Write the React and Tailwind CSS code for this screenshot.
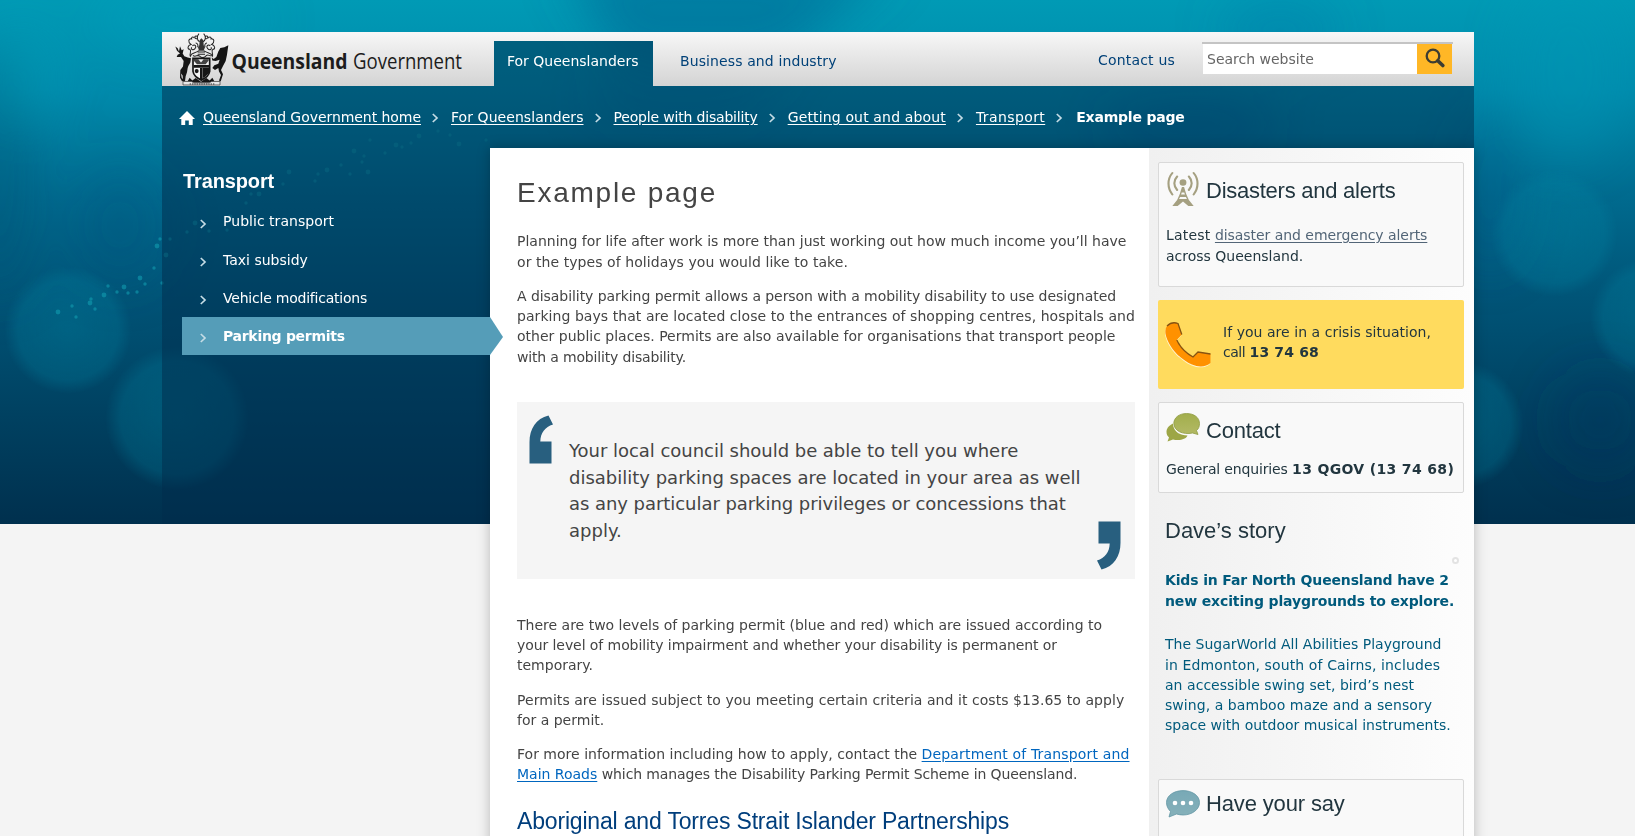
function T({ children, c = '' }) {
  return <span className={'whitespace-nowrap ' + c}>{children}</span>;
}

const DOTS = [
  [58, 312], [72, 306], [76, 317], [90, 303], [91, 299], [95, 309], [104, 295], [108, 286], [117, 292], [124, 287], [128, 293], [137, 292], [140, 278], [145, 284], [154, 268], [157, 246], [160, 239], [162, 283], [166, 255], [170, 239], [187, 232], [195, 223], [209, 231], [227, 230], [230, 217], [246, 203], [251, 194], [259, 194], [257, 187], [283, 184], [289, 172], [315, 181], [318, 174], [327, 170], [341, 165], [350, 174], [354, 151], [362, 162], [364, 156], [368, 172], [370, 140], [385, 153], [396, 145], [402, 147], [411, 143], [419, 136], [438, 131], [450, 135], [459, 144], [486, 140],
];

function Backdrop() {
  return (
    <svg className="absolute left-0 top-0" width="1635" height="524" viewBox="0 0 1635 524">
      <defs>
        <linearGradient id="sea" x1="0" y1="0" x2="0" y2="1">
          <stop offset="0" stopColor="#009ab5" />
          <stop offset=".17" stopColor="#008bac" />
          <stop offset=".38" stopColor="#006a8e" />
          <stop offset=".57" stopColor="#005477" />
          <stop offset=".78" stopColor="#004262" />
          <stop offset="1" stopColor="#00304e" />
        </linearGradient>
        <radialGradient id="bokeh">
          <stop offset="0" stopColor="#0088a6" stopOpacity=".34" />
          <stop offset=".78" stopColor="#0088a6" stopOpacity=".26" />
          <stop offset="1" stopColor="#0088a6" stopOpacity="0" />
        </radialGradient>
        <filter id="soft" filterUnits="userSpaceOnUse" x="-200" y="-200" width="2035" height="924"><feGaussianBlur stdDeviation="24" /></filter>
      </defs>
      <rect width="1635" height="524" fill="url(#sea)" />
      <g filter="url(#soft)">
        <ellipse cx="0" cy="170" rx="34" ry="130" fill="#004f74" opacity=".35" />
        <ellipse cx="120" cy="225" rx="50" ry="60" fill="#004a7c" opacity=".25" />
        <path d="M560-40H900L780 60H620Z" fill="#00608f" opacity=".5" />
        <ellipse cx="180" cy="20" rx="90" ry="30" fill="#00a4c0" opacity=".3" />
        <ellipse cx="1280" cy="30" rx="60" ry="30" fill="#0072a5" opacity=".3" />
        <ellipse cx="1190" cy="125" rx="90" ry="26" fill="#004080" opacity=".3" />
        <ellipse cx="680" cy="100" rx="100" ry="24" fill="#004080" opacity=".2" />
        <ellipse cx="25" cy="75" rx="32" ry="50" fill="#00a4bd" opacity=".3" />
        <ellipse cx="1570" cy="70" rx="60" ry="90" fill="#0098b8" opacity=".35" />
        <ellipse cx="1490" cy="190" rx="30" ry="80" fill="#005080" opacity=".3" />
        <ellipse cx="1600" cy="420" rx="50" ry="50" fill="#00305a" opacity=".3" />
      </g>
      <g fill="url(#bokeh)">
        <circle cx="68" cy="330" r="64" />
        <circle cx="177" cy="418" r="72" />
        <circle cx="1554" cy="233" r="64" />
        <circle cx="1460" cy="425" r="64" />
        <circle cx="1650" cy="318" r="60" />
      </g>
      <g fill="#12a3b5">
        {DOTS.map(([x, y], i) => <circle key={i} cx={x} cy={y} r={i % 3 === 0 ? 2.4 : 1.7} opacity={x < 175 ? 0.55 : 0.5} />)}
      </g>
      <path d="M162 86H494V41H653V86H1474V524H162Z" fill="#002b4b" opacity=".5" />
    </svg>
  );
}

function Crest() {
  return (
    <svg width="56" height="54" viewBox="12 8 168 156" preserveAspectRatio="none" className="shrink-0">
      <g fill="#151515">
        <path d="M27 70 18 62 13 50 20 55 24 64 27 49 32 61 38 58 35 70 40 78 50 82 60 84 58 96 52 106 50 112 48 124 44 136 42 150 36 150 35 134 30 128 32 140 40 149 33 150 27 140 28 118 36 108 38 92 30 80 17 80 20 74Z" />
        <path d="M172 46 160 52 148 54 142 64 136 80 128 86 122 82 124 90 134 92 146 88 142 100 130 104 124 112 132 118 142 112 144 122 150 132 144 148 149 151 156 130 150 118 156 106 164 92 168 74Z" />
        <path d="M50 150 56 140 64 148 74 141 90 152 106 141 116 148 124 140 130 150 112 154H68Z" />
      </g>
      <path d="M66 84H116V122C114 134 103 142 91 147 79 142 68 134 66 122Z" fill="#f3f3f3" stroke="#151515" strokeWidth="5" />
      <g fill="#151515">
        <path d="M68 103H115V111H68ZM87 112H95V146H87Z" />
        <path d="M96 112H114V124C110 132 102 138 96 141Z" />
        <path d="M69 86 82 87 90 96 98 87 113 87 113 90 104 101H78L69 92Z" opacity=".8" />
        <circle cx="77" cy="121" r="6" />
      </g>
      <g fill="none" stroke="#222" strokeWidth="3">
        <path d="M84 62C70 72 62 66 58 78 54 70 64 62 56 58 48 58 50 46 60 44 50 38 52 26 62 28 60 20 70 22 70 26M64 48c8-6 14 2 8 8s-14 2-10-4M98 62c14 10 22 4 26 16 4-8-6-16 2-20 8 0 6-12-4-14 10-6 8-18-2-16 2-8-8-6-8-2M118 48c-8-6-14 2-8 8s14 2 10-4M66 76c8 6 14-4 20 2s14 4 20-2 10 4 14 0" />
        <path d="M84 13c-8 8-6 20 2 23M98 13c8 8 6 20-2 23M78 20c-10-2-8 8 2 8M104 20c10-2 8 8-2 8M80 66H102M80 72H102M74 40c6 0 8 6 6 12M108 40c-6 0-8 6-6 12" />
      </g>
      <path d="M86 32 91 26 97 32 98 46 102 52 98 62H84L81 52 85 46Z" fill="#333" />
      <path d="M36 151H62L68 155H114L122 151H147V161H36Z" fill="#e6e6e6" stroke="#333" strokeWidth="2" />
      <path d="M56 158H130" stroke="#333" strokeWidth="3" strokeDasharray="4 3" />
    </svg>
  );
}

function Chevron({ className = '' }) {
  return (
    <svg width="7" height="10" viewBox="0 0 7 10" className={'shrink-0 ' + className}>
      <path d="M.8 1 5 5 .8 9" fill="none" stroke="#c5dce5" strokeWidth="1.700" />
    </svg>
  );
}

function Header() {
  return (
    <header className="flex h-[54px]">
      <div className="flex w-[332px] shrink-0 bg-linear-to-b from-[#f7f7f7] to-[#d4d4d4] pl-[13px]">
        <Crest />
        <svg width="263" height="54" className="shrink-0" fontFamily="'Open Sans','Noto Sans',sans-serif" fill="#1c1c1c">
          <text x=".5" y="37" fontSize="21.500" fontWeight="700" textLength="116" lengthAdjust="spacingAndGlyphs">Queensland</text>
          <text x="122" y="37" fontSize="21.500" textLength="109" lengthAdjust="spacingAndGlyphs">Government</text>
        </svg>
      </div>
      <div className="w-[159px] shrink-0">
        <div className="h-[9px] bg-linear-to-b from-[#f7f7f7] to-[#f1f1f1]" />
        <a className="flex h-[45px] pl-[13px] pt-[10px] leading-5 text-white"><T>For Queenslanders</T></a>
      </div>
      <div className="flex flex-1 bg-linear-to-b from-[#f7f7f7] to-[#d4d4d4]">
        <nav className="flex flex-1 justify-between pl-[27px] pr-[27px] pt-[19px] leading-5 text-[#004178]">
          <T c="tracking-[.110px]">Business and industry</T>
          <T c="-mt-px tracking-[.19px]">Contact us</T>
        </nav>
        <form className="mr-[21px] mt-[10px] flex h-8 w-[251px] border-t-2 border-[#c4c4c4]">
          <div className="ml-px flex h-[30px] flex-1 items-start bg-white pl-1 pt-[5px] leading-5 text-[#666]"><T>Search website</T></div>
          <div className="mr-px flex h-[30px] w-[35px] justify-center bg-[#ffb726] pt-[4px]">
            <svg width="20" height="21" viewBox="0 0 20 21" fill="none" stroke="#3c3c32">
              <circle cx="8" cy="8" r="6.300" strokeWidth="2.300" />
              <path d="m12.800 12.800 5 4.700" strokeWidth="3.600" strokeLinecap="round" />
            </svg>
          </div>
        </form>
      </div>
    </header>
  );
}

const CRUMBS = [
  ['Queensland Government home', 'tracking-[-.055px]'],
  ['For Queenslanders', 'tracking-[.06px]'],
  ['People with disability', 'tracking-[-.180px]'],
  ['Getting out and about', 'tracking-[.150px]'],
  ['Transport', 'tracking-[.400px]'],
];

function Breadcrumbs() {
  return (
    <div className="flex h-[62px] items-start pl-[17px] pt-[21px] leading-5 text-white">
      <svg width="16" height="14" viewBox="0 0 16 14" className="mr-2 mt-[4px] shrink-0"><path d="M8 0 16 8H13.700V14H9.800V9.500H6.200V14H2.300V8H0Z" fill="#fff" /></svg>
      {CRUMBS.map(([t, c]) => (
        <div key={t} className="flex">
          <T c={'underline underline-offset-2 ' + c}>{t}</T>
          <Chevron className="ml-[11px] mr-[12px] mt-[6px]" />
        </div>
      ))}
      <T c="ml-px font-bold tracking-[-.200px]">Example page</T>
    </div>
  );
}

function SideNav() {
  return (
    <nav className="w-[328px] shrink-0 pl-5 text-white">
      <h2 className="ml-px mt-[21px] text-[20px] leading-6 font-bold font-['Liberation_Sans']"><T c="tracking-[-.120px]">Transport</T></h2>
      <div className="mt-[10px]">
        {[['Public transport', 'tracking-[.03px]'], ['Taxi subsidy', 'mt-px'], ['Vehicle modifications', 'mt-px tracking-[-.220px]']].map(([t, c]) => (
          <div key={t} className="flex h-[38px] pl-[18px] pt-[8px] leading-5">
            <Chevron className="mr-[16px] mt-[8px]" /><T c={c}>{t}</T>
          </div>
        ))}
        <div className="relative z-10 flex h-[38px] w-[321px] bg-[#559db8] pl-[18px] pt-[8px] leading-5 font-bold [clip-path:polygon(0_0,308px_0,321px_20px,308px_100%,0_100%)]">
          <Chevron className="mr-[16px] mt-[8px]" /><T c="mt-px tracking-[-.290px]">Parking permits</T>
        </div>
      </div>
    </nav>
  );
}

function P({ lines, className = '' }) {
  return <p className={'leading-[20.200px] ' + className}>{lines.map(([t, c]) => <span className="block" key={t}><T c={c}>{t}</T></span>)}</p>;
}

function Quote({ className = '' }) {
  return <svg width="25" height="49" viewBox="0 0 25 49" className={'absolute ' + className}><path d="M19.500.500 24 9.500C16 12 11.500 18 11.300 26.500H22.500V48.500H0.500V27C.500 14 7 3.500 19.500.500Z" fill="#285f7f" /></svg>;
}

const LINK = 'text-[#0066bf] underline underline-offset-2 ';

function Main() {
  return (
    <main className="w-[659px] shrink-0 bg-white pl-[27px] text-[#444]">
      <h1 className="mt-[27px] text-[28px] leading-9 font-['Liberation_Sans']"><T c="tracking-[1.750px]">Example page</T></h1>
      <P className="mt-[20.400px]" lines={[['Planning for life after work is more than just working out how much income you’ll have', ''], ['or the types of holidays you would like to take.', 'tracking-[.065px]']]} />
      <P className="mt-[14.200px]" lines={[['A disability parking permit allows a person with a mobility disability to use designated', 'tracking-[-.060px]'], ['parking bays that are located close to the entrances of shopping centres, hospitals and', 'tracking-[.06px]'], ['other public places. Permits are also available for organisations that transport people', ''], ['with a mobility disability.', 'tracking-[-.170px]']]} />
      <blockquote className="relative mt-[35px] h-[177px] w-[618px] bg-[#f5f5f5] pl-[52px] pt-[36px] text-[18px] leading-[26.800px]">
        <Quote className="left-[12px] top-[13px]" />
        {[['Your local council should be able to tell you where', 'tracking-[-.030px]'], ['disability parking spaces are located in your area as well', ''], ['as any particular parking privileges or concessions that', 'tracking-[-.050px]'], ['apply.', '']].map(([t, c]) => <div key={t}><T c={c}>{t}</T></div>)}
        <Quote className="left-[579px] top-[119px] rotate-180" />
      </blockquote>
      <P className="mt-[36px]" lines={[['There are two levels of parking permit (blue and red) which are issued according to', ''], ['your level of mobility impairment and whether your disability is permanent or', 'tracking-[-.075px]'], ['temporary.', '']]} />
      <P className="mt-[14.400px]" lines={[['Permits are issued subject to you meeting certain criteria and it costs $13.65 to apply', 'tracking-[.050px]'], ['for a permit.', '']]} />
      <div className="mt-[14px] leading-[20.200px]">
        <div><T c="tracking-[.010px]">For more information including how to apply, contact the</T> <T c={LINK + 'tracking-[.160px]'}>Department of Transport and</T></div>
        <div><T c={LINK}>Main Roads</T> <T c="tracking-[-.110px]">which manages the Disability Parking Permit Scheme in Queensland.</T></div>
      </div>
      <h2 className="mt-[22px] text-[23px] leading-7 text-[#003e7c] font-['Liberation_Sans']"><T c="tracking-[-.175px]">Aboriginal and Torres Strait Islander Partnerships</T></h2>
    </main>
  );
}

function Heading({ children, c }) {
  return <h2 className="text-[22px] leading-7 font-['Liberation_Sans']"><T c={c}>{children}</T></h2>;
}

const CARD = 'rounded-[2px] border border-[#d9d9d9] bg-[#f9f9f9] ';

function Aside() {
  return (
    <aside className="w-[325px] shrink-0 bg-linear-to-r from-[#f0f0f0] to-[#fdfdfd] pl-[9px] pr-[10px] pt-[14px] text-[#22363f]">
      <section className={CARD + 'h-[125px] pl-[7px]'}>
        <div className="flex h-[62px] pt-[8px]">
          <svg width="32" height="36" viewBox="0 0 30 36" preserveAspectRatio="none" className="ml-px mr-[7px]" fill="none" stroke="#a5a081" strokeWidth="2" strokeLinecap="round">
            <path d="M5 2C.2 8 .2 17 5 23.500M25 2C29.800 8 29.800 17 25 23.500" />
            <path d="M9.500 5.500C6 9.500 6 15 9.500 19M20.500 5.500C24 9.500 24 15 20.500 19" />
            <circle cx="15" cy="11.500" r="3.200" fill="#a5a081" stroke="none" />
            <path d="M14 16H16L18 23 20.500 29 25 35H20L15 30.500 10 35H5L9.500 29 12 23Z" fill="#a5a081" stroke="none" />
            <path d="M13.800 21.500h2.400l.6 2h-3.600zM12.300 26h5.400l1 2h-7.400z" fill="#f9f9f9" stroke="none" />
          </svg>
          <div className="pt-[6px]"><Heading c="tracking-[-.250px]">Disasters and alerts</Heading></div>
        </div>
        <div className="leading-[21px]"><T c="tracking-[.200px]">Latest</T> <T c="text-[#526577] underline underline-offset-2 tracking-[-.050px]">disaster and emergency alerts</T></div>
        <div className="leading-[21px]"><T>across Queensland.</T></div>
      </section>
      <section className="mt-[13px] flex h-[89px] rounded-[2px] bg-[#ffdb5e] pl-[7px] pt-[22px]">
        <svg width="46" height="46" viewBox="0 0 46 46" className="mr-[12px] shrink-0">
          <path d="M2 4C5 1 9 0 13 1.500L16.800 12.500 11.800 18C15 25 21 31 28 35L33 30 45.500 32V41C41 45 34 45.500 27 42.500 14 37 3 24 .5 12 0 9 .5 6 2 4Z" fill="#fff" transform="translate(-.4 .9)" opacity=".7" />
          <path d="M2 4C5 1 9 0 13 1.500L16.800 12.500 11.800 18C15 25 21 31 28 35L33 30 45.500 32V41C41 45 34 45.500 27 42.500 14 37 3 24 .5 12 0 9 .5 6 2 4Z" fill="#ff9100" />
          <path d="M2 4C5 1 9 0 13 1.500L16.800 12.500M11.800 18C15 25 21 31 28 35L33 30 45.500 32" fill="none" stroke="#875311" strokeWidth="1.300" />
        </svg>
        <div className="leading-5"><div><T c="tracking-[.040px]">If you are in a crisis situation,</T></div><div><T c="tracking-[-.500px]">call</T> <T c="font-bold tracking-[.150px]">13 74 68</T></div></div>
      </section>
      <section className={CARD + 'mt-[13px] h-[91px] pl-[7px]'}>
        <div className="flex h-[56px] pt-[9px]">
          <svg width="34" height="29" viewBox="0 0 34 29" className="mr-[6px] mt-px shrink-0">
            <defs><linearGradient id="g1" x1="0" y1="0" x2="0" y2="1"><stop offset="0" stopColor="#a2ae4c" /><stop offset="1" stopColor="#b3b965" /></linearGradient></defs>
            <path d="M7 10.500C2 13 .5 16 .5 19 .5 21.500 1.500 23 3 24.500L1.500 28.500 7 26.500C13 28 20 26.500 21.500 22.500 13 22.500 7 17.500 7 10.500Z" fill="#9da646" />
            <path d="M20.500.500C28 .5 33.500 4.500 33.500 10.500 33.500 13.500 32.500 16 30.500 17.500L32 21.500 26.500 20C17 22 8 18 7.800 10.500 7.800 4.500 13.500.500 20.500.500Z" fill="url(#g1)" stroke="#8f9c42" strokeWidth=".8" />
          </svg>
          <div className="pt-[5px]"><Heading c="tracking-[-.200px]">Contact</Heading></div>
        </div>
        <div className="leading-5"><T c="tracking-[-.160px]">General enquiries</T> <T c="font-bold tracking-[.340px]">13 QGOV (13 74 68)</T></div>
      </section>
      <section className="relative pl-[7px] pt-[24px] text-[#005a7c]">
        <div className="text-[#22363f]"><Heading>Dave’s story</Heading></div>
        <span className="absolute right-[5px] top-[64px] size-[7px] rounded-full border-2 border-[#e3e3e3] bg-white" />
        <div className="mt-[25px] font-bold leading-[20.500px]"><div><T c="tracking-[-.150px]">Kids in Far North Queensland have 2</T></div><div><T c="tracking-[-.130px]">new exciting playgrounds to explore.</T></div></div>
        <P className="mt-[23.400px]" lines={[['The SugarWorld All Abilities Playground', ''], ['in Edmonton, south of Cairns, includes', 'tracking-[.130px]'], ['an accessible swing set, bird’s nest', 'tracking-[.040px]'], ['swing, a bamboo maze and a sensory', 'tracking-[.060px]'], ['space with outdoor musical instruments.', '']]} />
      </section>
      <section className={CARD + 'mt-[43.600px] h-[91px] pl-[7px]'}>
        <div className="flex pt-[10px]">
          <svg width="34" height="28" viewBox="0 0 34 28" className="mr-[6px] shrink-0">
            <defs><linearGradient id="g2" x1="0" y1="0" x2="0" y2="1"><stop offset="0" stopColor="#78a9b6" /><stop offset="1" stopColor="#86b1ba" /></linearGradient></defs>
            <path d="M17 .6C26 .6 33.500 5.500 33.500 12.500S26 25 17 25C15 25 12.500 24.600 10.500 24L3 27 4.500 21.500C2 19 .5 16 .5 12.500.500 5.500 8 .6 17 .6Z" fill="url(#g2)" stroke="#6397a5" strokeWidth=".8" />
            <g fill="#fff"><circle cx="9" cy="13" r="2.300" /><circle cx="17" cy="13" r="2.300" /><circle cx="25" cy="13" r="2.300" /></g>
          </svg>
          <Heading c="tracking-[-.150px]">Have your say</Heading>
        </div>
      </section>
    </aside>
  );
}

export default function App() {
  return (
    <div className="relative h-[836px] overflow-hidden bg-[#f4f4f4] text-[14px] font-['DejaVu_Sans',sans-serif]">
      <Backdrop />
      <div className="relative ml-[162px] w-[1312px] pt-8">
        <Header />
        <Breadcrumbs />
        <div className="flex h-[688px]">
          <SideNav />
          <div className="flex h-[700px] shadow-[0_0_12px_rgba(0,0,0,.25)]">
            <Main />
            <Aside />
          </div>
        </div>
      </div>
    </div>
  );
}
